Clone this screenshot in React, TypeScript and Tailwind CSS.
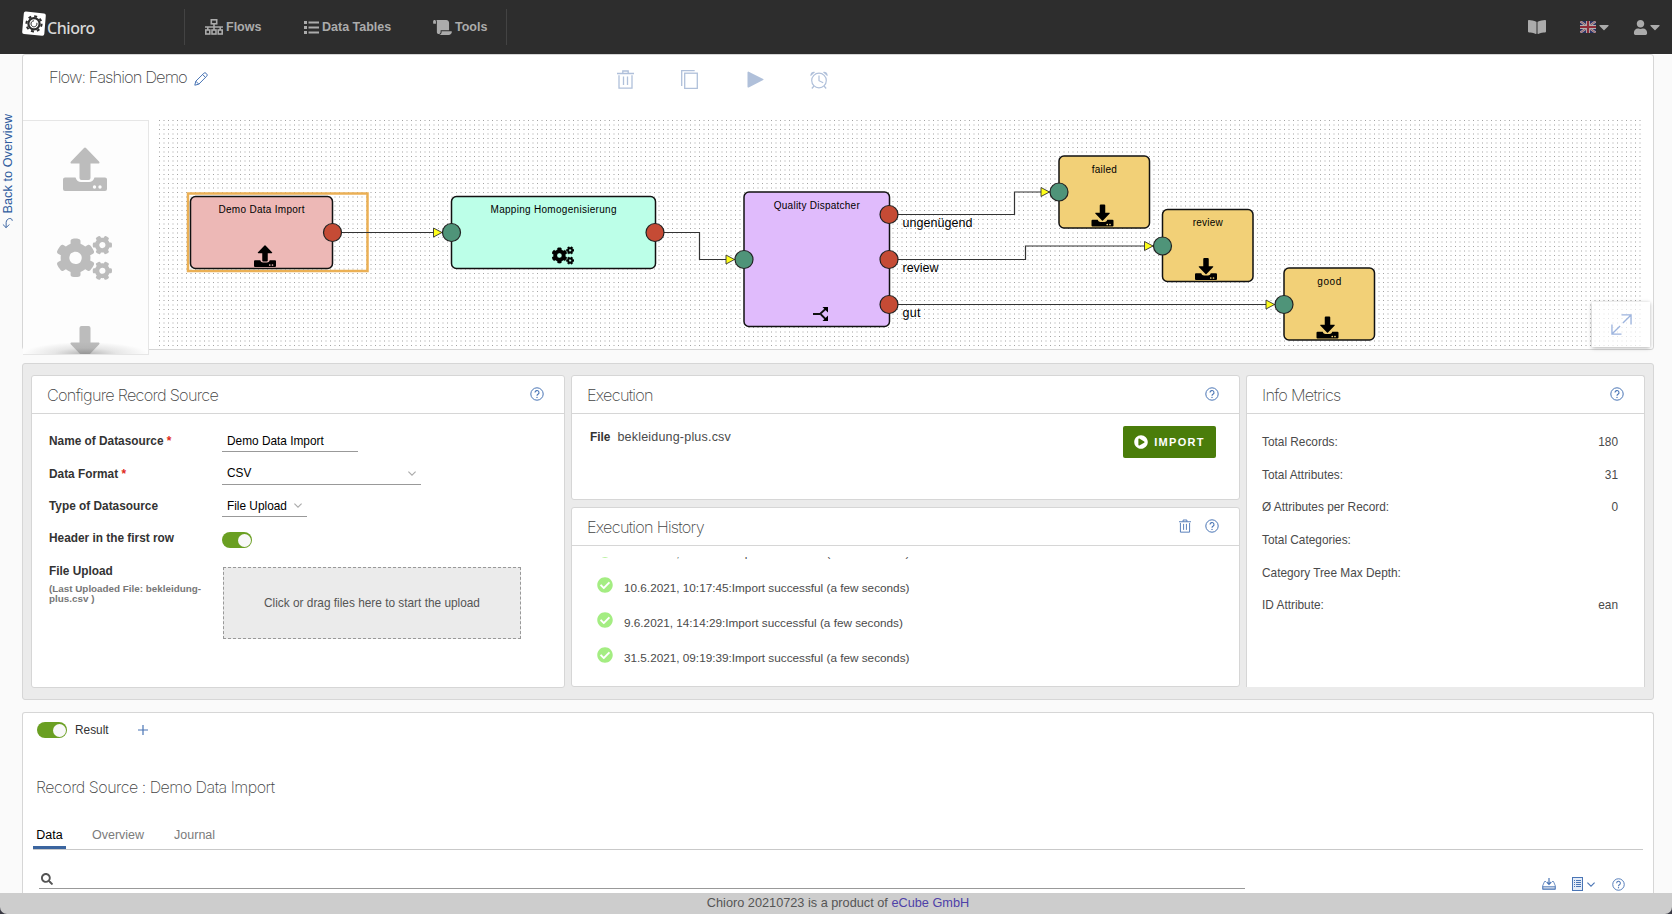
import type { ReactNode } from 'react';
import {
  FaBookOpen,
  FaCaretDown,
  FaCheckCircle,
  FaCogs,
  FaPlayCircle,
  FaScroll,
  FaSearch,
  FaUser,
} from 'react-icons/fa';
import { clsx } from 'clsx';

interface IconProps {
  className?: string;
}

function LogoIcon({ className }: IconProps) {
  return (
    <svg viewBox="0 0 24 26" className={className}>
      <path
        d="M4 .6 22 2.6a2 2 0 0 1 1.8 2.2L22.300 23a2 2 0 0 1-2.200 1.800L2 23a2 2 0 0 1-1.800-2.200L1.800 2.400A2 2 0 0 1 4 .6z"
        fill="#fff"
      />
      <circle cx="12" cy="12.800" r="5.600" fill="none" stroke="#2d2d2d" strokeWidth="2.200" />
      <circle
        cx="12"
        cy="12.800"
        r="7.600"
        fill="none"
        stroke="#2d2d2d"
        strokeWidth="2"
        strokeDasharray="2.980 2.980"
      />
      <path d="M12 9.800a3 3 0 1 0 2.800 2" fill="none" stroke="#2d2d2d" strokeWidth="1" />
    </svg>
  );
}

function FlowsIcon({ className }: IconProps) {
  return (
    <svg viewBox="0 0 18 16" className={className} fill="none" stroke="currentColor" strokeWidth="1.600">
      <rect x="6.300" y=".8" width="5.400" height="4" />
      <rect x=".8" y="11" width="4" height="4" />
      <rect x="7" y="11" width="4" height="4" />
      <rect x="13.200" y="11" width="4" height="4" />
      <path d="M9 5v6M0 8h18M2.800 8v3M15.200 8v3" />
    </svg>
  );
}

function TablesIcon({ className }: IconProps) {
  return (
    <svg viewBox="0 0 15 13" className={className} fill="currentColor">
      <path d="M0 0h3v3H0zM0 5h3v3H0zM0 10h3v3H0zM4.500.6H15v1.800H4.500zM4.500 5.600H15v1.800H4.500zM4.500 10.600H15v1.800H4.500z" />
    </svg>
  );
}

function UkFlag({ className }: IconProps) {
  return (
    <svg viewBox="0 0 16 12" className={className}>
      <path d="M0 0h16v12H0z" fill="#2b2f63" />
      <path d="M0 0l16 12M16 0 0 12" stroke="#b0b0b0" strokeWidth="2.200" />
      <path d="M0 0l16 12M16 0 0 12" stroke="#93404c" strokeWidth=".8" />
      <path d="M8 0v12M0 6h16" stroke="#b0b0b0" strokeWidth="4" />
      <path d="M8 0v12M0 6h16" stroke="#8f2c39" strokeWidth="2.200" />
    </svg>
  );
}

function PencilIcon({ className }: IconProps) {
  return (
    <svg viewBox="0 0 14 14" className={className} fill="none" stroke="currentColor" strokeLinejoin="round">
      <path d="M.8 13.200l1-4L9.800 1.300a1.600 1.600 0 0 1 2.300 0l.6.6a1.600 1.600 0 0 1 0 2.300L4.800 12.200zM8.600 2.500l2.900 2.900M1.800 9.200l3 3" />
    </svg>
  );
}

function TrashIcon({ className }: IconProps) {
  return (
    <svg viewBox="0 0 17 19" className={className} fill="none" stroke="currentColor" strokeWidth="1.300">
      <path d="M0 3.500h17M5.800 3.300V1h5.400v2.300M2 5.200v13h13v-13M6.500 6.500v8.500M10.500 6.500v8.500" />
    </svg>
  );
}

function CopyIcon({ className }: IconProps) {
  return (
    <svg viewBox="0 0 17 19" className={className} fill="none" stroke="currentColor" strokeWidth="1.300">
      <rect x="3.700" y="3.200" width="12.600" height="15.200" />
      <path d="M.7 16V.7h13" />
    </svg>
  );
}

function PlayIcon({ className }: IconProps) {
  return (
    <svg viewBox="0 0 17 17" className={className} fill="currentColor">
      <path d="M.5 1.400A.8.800 0 0 1 1.700.7L16.200 8a.6.600 0 0 1 0 1L1.700 16.400a.8.800 0 0 1-1.200-.7z" />
    </svg>
  );
}

function AlarmIcon({ className }: IconProps) {
  return (
    <svg viewBox="0 0 18 18" className={className} fill="none" stroke="currentColor">
      <circle cx="9" cy="9.500" r="7.300" strokeWidth="1.200" />
      <path d="M9 4.500v5.200l4.200 2M4 15l-2.200 2.500M14 15l2.200 2.500" strokeWidth="1.200" />
      <path d="M.6 5.200A3.500 3.500 0 0 1 5.200.9zM17.400 5.200A3.500 3.500 0 0 0 12.800.9z" fill="currentColor" stroke="none" />
    </svg>
  );
}

function HelpIcon({ className }: IconProps) {
  return (
    <svg viewBox="0 0 14 14" className={className} fill="none" stroke="currentColor">
      <circle cx="7" cy="7" r="6.200" strokeWidth="1" />
      <path d="M5 5.600a2 2 0 1 1 3 1.700c-.7.400-1 .7-1 1.500" strokeWidth="1.100" />
      <circle cx="7" cy="10.400" r=".7" fill="currentColor" stroke="none" />
    </svg>
  );
}

function ChevronIcon({ className }: IconProps) {
  return (
    <svg viewBox="0 0 8 5" className={className} fill="none" stroke="currentColor" strokeWidth="1.100">
      <path d="M.4.600 4 4.200 7.600.600" />
    </svg>
  );
}

function UndoIcon({ className }: IconProps) {
  return (
    <svg viewBox="0 0 12 12" className={className} fill="none" stroke="currentColor">
      <path d="M4.500 1 1 4.500 4.500 8M1 4.500h5.500c2.500 0 4.500 2 4.500 4s-1 2.500-2.500 2.700" />
    </svg>
  );
}

function ExpandIcon({ className }: IconProps) {
  return (
    <svg viewBox="0 0 22 22" className={className} fill="none" stroke="currentColor" strokeWidth="1.400">
      <path d="M11 1h10v10M21 1l-8.500 8.500M11 21H1V11M1 21l8.500-8.500" />
    </svg>
  );
}

function SaveIcon({ className }: IconProps) {
  return (
    <svg viewBox="0 0 14 12" className={className} fill="none" stroke="currentColor">
      <path d="M4 3.500H2.500L.6 8v3.400h12.800V8l-1.900-4.500H10" strokeWidth=".8" />
      <path d="M1 8.500h12v2.500H1z" fill="#b9c9e2" strokeWidth=".6" />
      <path d="M7 0v6M4.700 4 7 6.300 9.300 4" strokeWidth="1.200" />
    </svg>
  );
}

function ListDocIcon({ className }: IconProps) {
  return (
    <svg viewBox="0 0 11 14" className={className} fill="none" stroke="currentColor">
      <rect x=".5" y=".5" width="10" height="13" fill="#e4ecf8" />
      <path d="M2 3.500h1M4 3.500h5M2 5.500h1M4 5.500h5M2 7.500h1M4 7.500h5M2 9.500h1M4 9.500h5" />
    </svg>
  );
}

// Tray glyphs share one 44x44 box: the arrow sits over the drive
function Tray() {
  return (
    <path d="M2 30.500h10.500c1 3 3 4.500 5.500 4.500h8c2.500 0 4.500-1.500 5.500-4.500H42a2 2 0 0 1 2 2V42a2 2 0 0 1-2 2H2a2 2 0 0 1-2-2v-9.500a2 2 0 0 1 2-2zM31.500 38.300a1.700 1.700 0 1 0 0 3.400 1.700 1.700 0 0 0 0-3.400zm5.500 0a1.700 1.700 0 1 0 0 3.400 1.700 1.700 0 0 0 0-3.400z" />
  );
}

function UploadShape() {
  return (
    <>
      <path d="M21 .9a1.500 1.500 0 0 1 2 0l13 13.500c1 1 .5 2.100-.8 2.100H27.500V31a2 2 0 0 1-2 2h-7a2 2 0 0 1-2-2V16.500H8.800c-1.300 0-1.800-1.100-.8-2.100z" />
      <Tray />
    </>
  );
}

function DownloadShape() {
  return (
    <>
      <path d="M18.500 0h7a2 2 0 0 1 2 2v14.500h7.700c1.300 0 1.800 1.100.8 2.100L23 32.100a1.500 1.500 0 0 1-2 0L8 18.600c-1-1-.5-2.100.8-2.100h7.700V2a2 2 0 0 1 2-2z" />
      <Tray />
    </>
  );
}

interface NodeProps {
  x: number;
  y: number;
  width: number;
  height: number;
  fill: string;
  label: string;
  labelWidth: number;
  children?: ReactNode;
}

function FlowNode({ x, y, width, height, fill, label, labelWidth, children }: NodeProps) {
  return (
    <g>
      <rect x={x} y={y} width={width} height={height} rx="5" fill={fill} stroke="#111" strokeWidth="1.500" />
      <text x={x + width / 2} y={y + 16.5} textAnchor="middle" textLength={labelWidth} fontSize="10">
        {label}
      </text>
      {children}
    </g>
  );
}

function Port({ x, y, type }: { x: number; y: number; type: 'in' | 'out' }) {
  return (
    <>
      {type === 'in' && (
        <path d={`M${x - 18} ${y - 4.5}v9l8.500-4.500z`} fill="#ffff1a" stroke="#333" strokeWidth=".9" />
      )}
      <circle cx={x} cy={y} r="9" fill={type === 'in' ? '#4f9479' : '#c54b35'} stroke="#222" strokeWidth="1.200" />
    </>
  );
}

const targets = [
  { label: 'failed', labelWidth: 25, x: 1059, y: 156 },
  { label: 'review', labelWidth: 30, x: 1162.5, y: 209.5 },
  { label: 'good', labelWidth: 24, x: 1284, y: 268 },
];

function FlowCanvas() {
  return (
    <svg
      width="1494"
      height="228"
      viewBox="159 120 1494 228"
      className="block font-['Liberation_Sans',sans-serif]"
    >
      <defs>
        <pattern id="dots" x="159" y="120" width="9" height="9" patternUnits="userSpaceOnUse">
          <path d="M0 0h1v1H0zM4.500 0h1v1h-1zM0 4.500h1v1H0zM4.500 4.500h1v1h-1z" fill="#a2a2a2" />
        </pattern>
      </defs>
      <rect x="159" y="120" width="1482" height="228" fill="url(#dots)" />

      <rect x="188" y="193.500" width="179.500" height="77.500" fill="none" stroke="#ebb055" strokeWidth="2.500" />

      <g fill="none" stroke="#333" strokeWidth="1.200">
        <path d="M332.500 232.500H442" />
        <path d="M655 232.500h44.500v27H735" />
        <path d="M889 214.500h125.500V192H1050" />
        <path d="M889 259.500h136.500V246H1153" />
        <path d="M889 304.500H1275" />
      </g>

      <FlowNode x={190.5} y={196.5} width={142} height={72} fill="#edb8b6" label="Demo Data Import" labelWidth={86}>
        <g transform="translate(254 245) scale(.5)">
          <UploadShape />
        </g>
      </FlowNode>
      <FlowNode
        x={451.5}
        y={196.5}
        width={204}
        height={72}
        fill="#bcffe8"
        label="Mapping Homogenisierung"
        labelWidth={126}
      >
        <FaCogs x="552" y="244.500" size={22} color="#000" stroke="#000" strokeWidth="12" />
      </FlowNode>
      <FlowNode x={744} y={192} width={145.5} height={134.5} fill="#e0bbfc" label="Quality Dispatcher" labelWidth={86}>
        <path d="M813 314h7l6-5.500M821 314.500l5 5" fill="none" stroke="#111" strokeWidth="1.800" />
        <path d="M822.500 307h5.500v5.500zM828 321h-5.500l5.500-5.500z" />
      </FlowNode>
      {targets.map((t) => (
        <FlowNode
          key={t.label}
          x={t.x}
          y={t.y}
          width={90.5}
          height={72}
          fill="#f2d077"
          label={t.label}
          labelWidth={t.labelWidth}
        >
          <g transform={`translate(${t.x + 32.5} ${t.y + 48.5}) scale(.5)`}>
            <DownloadShape />
          </g>
        </FlowNode>
      ))}

      <Port x={332.5} y={232.5} type="out" />
      <Port x={451.5} y={232.5} type="in" />
      <Port x={655} y={232.5} type="out" />
      <Port x={744} y={259.5} type="in" />
      <Port x={889} y={214.5} type="out" />
      <Port x={889} y={259.5} type="out" />
      <Port x={889} y={304.5} type="out" />
      <Port x={1059} y={192} type="in" />
      <Port x={1162.5} y={246} type="in" />
      <Port x={1284} y={304.5} type="in" />

      <g fontSize="12.500">
        <text x="902.500" y="227" textLength="70">
          ungenügend
        </text>
        <text x="902.500" y="272" textLength="36">
          review
        </text>
        <text x="902.500" y="317" textLength="18">
          gut
        </text>
      </g>
    </svg>
  );
}

function Title({ children, className }: { children: ReactNode; className?: string }) {
  return (
    <h2
      className={clsx(
        "font-['Inter',sans-serif] leading-5 font-extralight whitespace-nowrap text-[#444]",
        className,
      )}
    >
      {children}
    </h2>
  );
}

function Toggle() {
  return (
    <div className="flex h-4 w-[30px] items-center justify-end rounded-full bg-[#6a9f22] pr-[1.500px]">
      <div className="size-[13px] rounded-full bg-[#f8f8f8]" />
    </div>
  );
}

interface PanelProps {
  title: string;
  className?: string;
  actions?: ReactNode;
  children: ReactNode;
}

function Panel({ title, className, actions, children }: PanelProps) {
  return (
    <section className={clsx('flex flex-col rounded-[3px] border border-[#d6d6d6] bg-white', className)}>
      <header className="flex h-[38px] shrink-0 items-center justify-between border-b border-[#d6d6d6] pr-5 pl-[15px]">
        <Title className="pt-px text-[16.300px] tracking-[-0.750px]">{title}</Title>
        <div className="flex items-center gap-[14px] pb-px text-[#4a75b5]">
          {actions}
          <HelpIcon className="size-[14px]" />
        </div>
      </header>
      {children}
    </section>
  );
}

function TopBar() {
  return (
    <header className="flex h-[54px] shrink-0 items-center bg-[#2d2d2d] text-[12.500px] font-bold text-[#ababab]">
      <div className="flex w-[184px] items-start pl-[22px]">
        <LogoIcon className="-mt-[6px] h-[26px] w-6" />
        <span className="ml-px pt-px font-['Noto_Sans',sans-serif] text-[16px] leading-5 font-medium tracking-[-0.450px] text-[#d8d8d8]">
          Chioro
        </span>
      </div>
      <nav className="flex h-9 items-center border-x border-[#434343] pl-5">
        <a className="flex w-[99px] items-center gap-[3px]">
          <FlowsIcon className="h-4 w-[18px]" />
          Flows
        </a>
        <a className="flex w-[129px] items-center gap-[3px]">
          <TablesIcon className="h-[13px] w-[15px]" />
          Data Tables
        </a>
        <a className="flex w-[73px] items-center gap-[3px]">
          <FaScroll className="h-[15px] w-[19px]" />
          Tools
        </a>
      </nav>
      <div className="ml-auto flex items-center pr-2">
        <FaBookOpen className="mr-[34px] size-[18px]" />
        <UkFlag className="h-3 w-4" />
        <FaCaretDown className="mr-[21px] size-4" />
        <FaUser className="-mr-px size-[15px]" />
        <FaCaretDown className="mr-px size-4" />
      </div>
    </header>
  );
}

function Palette() {
  return (
    <aside className="relative h-[235px] w-[126px] shrink-0 overflow-hidden border border-l-0 border-[#e6e6e6] bg-[#fdfdfd]">
      <div className="flex flex-col items-center pt-[26px] pr-[2px] text-[#bcbcbc]">
        <svg viewBox="0 0 44 44" className="size-11" fill="currentColor">
          <UploadShape />
        </svg>
        <FaCogs className="mt-[44px] h-[46px] w-[55px]" />
        <svg viewBox="0 0 44 44" className="mt-[45px] size-11" fill="currentColor">
          <DownloadShape />
        </svg>
      </div>
      <div className="absolute inset-x-0 bottom-0 h-3 bg-[radial-gradient(50%_100%_at_50%_100%,rgba(110,110,110,.5),rgba(160,160,160,.25)_50%,transparent)]" />
    </aside>
  );
}

function FlowSection() {
  return (
    <section className="flex h-[296px] shrink-0 flex-col rounded-[3px] border border-[#d6d6d6] bg-white">
      <div className="flex h-[65px] shrink-0 items-start">
        <div className="flex w-[594px] items-center pt-3 pl-[26px]">
          <Title className="text-[16.500px] tracking-[-0.930px]">Flow: Fashion Demo</Title>
          <PencilIcon className="mt-[3px] ml-[7px] size-[14px] text-[#4a75b5]" />
        </div>
        <div className="flex items-center pt-[15px] text-[#b0c0da]">
          <TrashIcon className="mr-[47px] h-[19px] w-[17px]" />
          <CopyIcon className="mr-[49px] h-[19px] w-[17px]" />
          <PlayIcon className="mr-[46px] size-[17px]" />
          <AlarmIcon className="size-[18px]" />
        </div>
      </div>
      <div className="relative flex h-[229px] items-start">
        <Palette />
        <div className="ml-[10px] overflow-hidden">
          <FlowCanvas />
        </div>
        <button className="absolute right-[3px] bottom-[2px] flex h-[45px] w-[58px] items-center justify-center bg-white/70 text-[#9db4de] shadow-[0_1px_4px_rgba(0,0,0,.3)]">
          <ExpandIcon className="size-[21px]" />
        </button>
      </div>
    </section>
  );
}

function FieldLabel({ children, required }: { children: ReactNode; required?: boolean }) {
  return (
    <div className="w-[173px] shrink-0 font-bold text-[#333]">
      {children}
      {required && <span className="text-[#e02b20]"> *</span>}
    </div>
  );
}

function ConfigurePanel() {
  return (
    <Panel title="Configure Record Source" className="h-[313px] w-[534px]">
      <div className="pt-[18px] pl-[17px] leading-4">
        <div className="flex h-[33px]">
          <div className="pt-[1px]">
            <FieldLabel required>Name of Datasource</FieldLabel>
          </div>
          <div className="h-[20px] w-[136px] border-b border-[#999] pt-[1px] pl-[5px] text-black">
            Demo Data Import
          </div>
        </div>
        <div className="flex h-8">
          <div className="pt-[1px]">
            <FieldLabel required>Data Format</FieldLabel>
          </div>
          <div className="flex h-5 w-[199px] justify-between border-b border-[#999] pr-[5px] pl-[5px] text-black">
            CSV
            <ChevronIcon className="mt-[6px] h-[5px] w-2 text-[#aaa]" />
          </div>
        </div>
        <div className="flex h-[33px]">
          <div className="pt-[1px]">
            <FieldLabel>Type of Datasource</FieldLabel>
          </div>
          <div className="flex h-[20px] w-[85px] justify-between border-b border-[#999] pt-[1px] pr-[5px] pl-[5px] text-black">
            File Upload
            <ChevronIcon className="mt-[5px] h-[5px] w-2 text-[#aaa]" />
          </div>
        </div>
        <div className="flex h-[33px]">
          <FieldLabel>Header in the first row</FieldLabel>
          <div className="pt-[2px]">
            <Toggle />
          </div>
        </div>
        <div className="flex">
          <div className="w-[174px]">
            <FieldLabel>File Upload</FieldLabel>
            <p className="mt-[5px] w-40 text-[9.850px] leading-[10px] font-bold text-[#777]">
              (Last Uploaded File: bekleidung-plus.csv )
            </p>
          </div>
          <div className="mt-[4px] flex h-[72px] w-[298px] items-center justify-center border border-dashed border-[#999] bg-[#ebebeb] text-[#555]">
            Click or drag files here to start the upload
          </div>
        </div>
      </div>
    </Panel>
  );
}

const history = [
  '14.6.2021, 09:52:13:Import successful (a few seconds)',
  '10.6.2021, 10:17:45:Import successful (a few seconds)',
  '9.6.2021, 14:14:29:Import successful (a few seconds)',
  '31.5.2021, 09:19:39:Import successful (a few seconds)',
];

function ExecutionColumn() {
  return (
    <div className="flex w-[669px] flex-col gap-[7px]">
      <Panel title="Execution" className="h-[125px]">
        <div className="flex items-start justify-between pt-[12px] pr-[23px] pl-[18px]">
          <div className="flex gap-[7px] pt-[3px] leading-4">
            <span className="font-bold text-[#333]">File</span>
            <span className="text-[12.500px] tracking-[0.200px]">bekleidung-plus.csv</span>
          </div>
          <button className="flex h-8 w-[93px] items-center justify-center gap-[6px] rounded-[2px] bg-[#4a7d0a] text-[11px] font-bold tracking-[1.300px] text-white">
            <FaPlayCircle className="size-[14px]" />
            IMPORT
          </button>
        </div>
      </Panel>
      <Panel
        title="Execution History"
        className="h-[180px]"
        actions={<TrashIcon className="h-[14px] w-3" />}
      >
        <div className="mt-[11px] h-[129px] overflow-hidden pl-[25px] text-[11.750px]">
          <ul className="-mt-[24px]">
            {history.map((entry) => (
              <li key={entry} className="flex h-[35px] items-start gap-[11px]">
                <FaCheckCircle className="mt-[9px] size-4 text-[#a4ed82]" />
                <span className="pt-[12px] leading-4">{entry}</span>
              </li>
            ))}
          </ul>
        </div>
      </Panel>
    </div>
  );
}

const metrics = [
  { label: 'Total Records:', value: '180' },
  { label: 'Total Attributes:', value: '31' },
  { label: 'Ø Attributes per Record:', value: '0' },
  { label: 'Total Categories:', value: '' },
  { label: 'Category Tree Max Depth:', value: '' },
  { label: 'ID Attribute:', value: 'ean' },
];

function MetricsPanel() {
  return (
    <Panel title="Info Metrics" className="h-[312px] w-[399px] rounded-b-none border-b-0">
      <dl className="pt-[20px] pr-[26px] pl-[15px]">
        {metrics.map((metric) => (
          <div key={metric.label} className="flex h-[32.700px] justify-between leading-4">
            <dt>{metric.label}</dt>
            <dd>{metric.value}</dd>
          </div>
        ))}
      </dl>
    </Panel>
  );
}

function ResultSection() {
  return (
    <section className="mt-[12px] flex min-h-0 flex-1 flex-col rounded-t-[3px] border border-b-0 border-[#d6d6d6] bg-white">
      <div className="flex items-center pt-[9px] pl-[14px] text-[#333]">
        <Toggle />
        <span className="ml-2 leading-4">Result</span>
        <svg viewBox="0 0 10 10" className="ml-[29px] size-[10px]">
          <path d="M5 0v10M0 5h10" stroke="#4a75b5" strokeWidth="1.200" />
        </svg>
      </div>
      <Title className="mt-[39px] ml-[13px] text-[16px] tracking-[-0.500px]">Record Source : Demo Data Import</Title>
      <div className="mx-[10px] mt-[28px] flex h-[25px] gap-[25px] border-b border-[#c9c9c9] text-[12.500px] leading-5 text-[#7b7b7b]">
        <span className="h-[24px] w-[33px] border-b-[3px] border-[#3b659f] text-center text-black">Data</span>
        <span className="ml-px">Overview</span>
        <span className="ml-[5px]">Journal</span>
      </div>
      <div className="flex items-start justify-between pr-[28px] pl-4">
        <div className="flex h-[39px] w-[1206px] items-end border-b border-[#999] pb-[3px] pl-[2px]">
          <FaSearch className="size-3 text-[#555]" />
        </div>
        <div className="flex items-center pt-[27px] text-[#4a75b5]">
          <SaveIcon className="mr-4 h-3 w-[14px]" />
          <ListDocIcon className="mr-[4px] h-[14px] w-[11px]" />
          <ChevronIcon className="mr-[17px] h-[5px] w-2" />
          <HelpIcon className="size-[13px]" />
        </div>
      </div>
    </section>
  );
}

export default function App() {
  return (
    <div className="flex h-[914px] w-[1672px] flex-col overflow-hidden bg-[#fafafa] font-['Liberation_Sans',Arial,sans-serif] text-[11.850px] text-[#4a4a4a]">
      <TopBar />
      <div className="flex min-h-0 flex-1">
        <aside className="flex w-[22px] shrink-0 justify-center pt-[60px] pr-[7px]">
          <a className="flex h-fit rotate-180 items-center gap-[4px] text-[12.800px] leading-4 whitespace-nowrap text-[#2f5c9e] [writing-mode:vertical-rl]">
            <UndoIcon className="size-[11px] rotate-90" />
            Back to Overview
          </a>
        </aside>
        <main className="flex w-[1632px] shrink-0 flex-col">
          <FlowSection />
          <div className="mt-[13px] flex h-[337px] shrink-0 gap-[6px] rounded-[3px] border border-[#d6d6d6] bg-[#ebebeb] pt-[11px] pl-[8px]">
            <ConfigurePanel />
            <ExecutionColumn />
            <MetricsPanel />
          </div>
          <ResultSection />
        </main>
      </div>
      <footer className="h-[21px] shrink-0 bg-[#3a3a44]">
        <p className="h-full rounded-b-[7px] bg-[#cdcdcd] pl-1 text-center text-[12.730px] leading-5 text-[#555]">
          Chioro 20210723 is a product of <a className="text-[#4e41a8]">eCube GmbH</a>
        </p>
      </footer>
    </div>
  );
}
